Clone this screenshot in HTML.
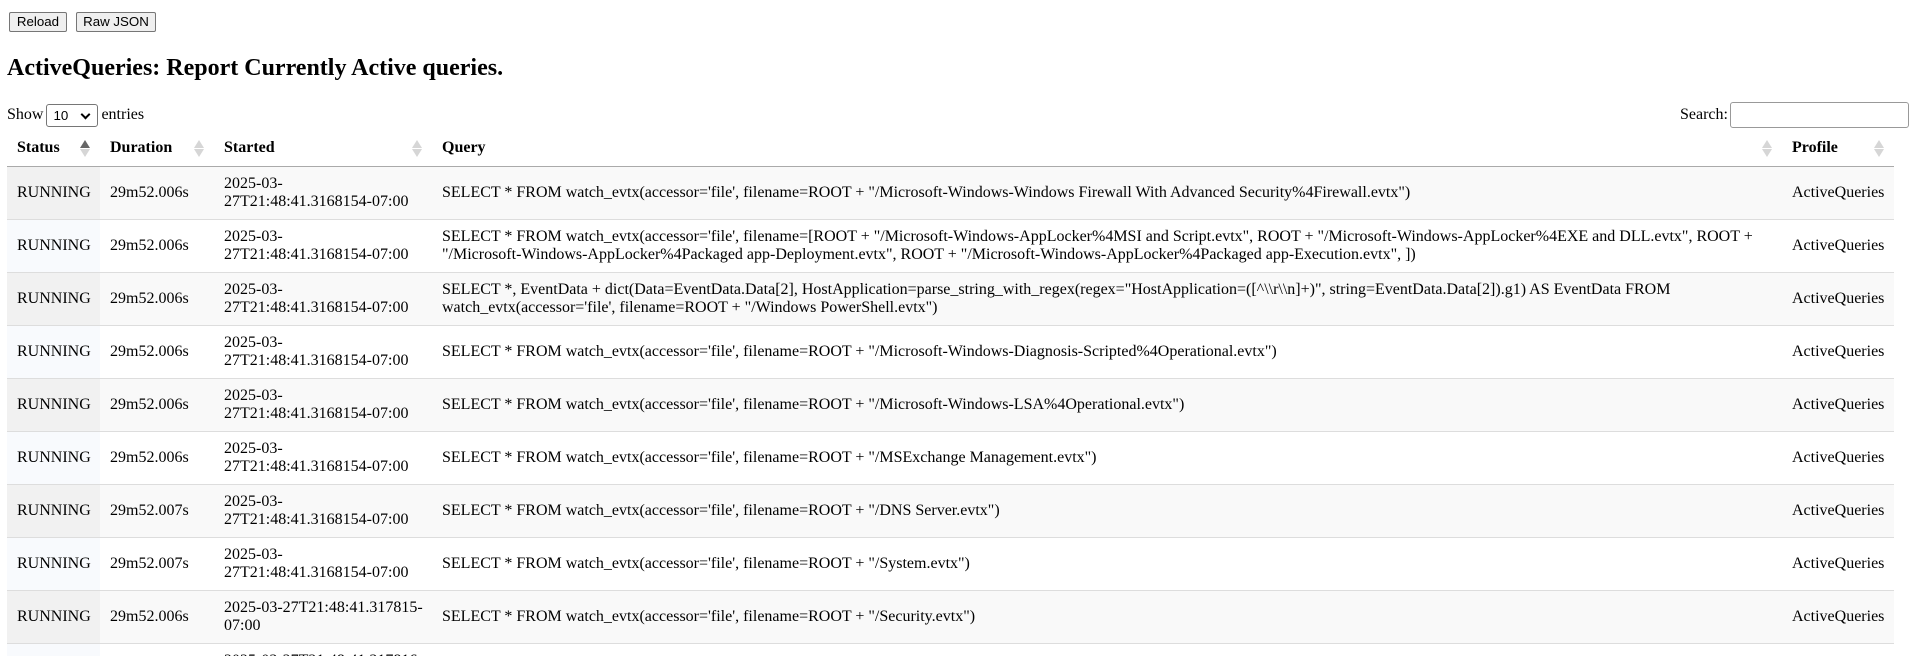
<!DOCTYPE html>
<html><head><meta charset="utf-8">
<style>
html,body{margin:0;padding:0;background:#fff;width:1917px;height:656px;overflow:hidden}
body{font-family:"Liberation Serif","Times New Roman",serif;font-size:16px;color:#000;position:relative}
.btn{position:absolute;top:12px;height:20px;font-family:"Liberation Sans",Arial,sans-serif;font-size:13.3px;background:#efefef;border:1px solid #767676;border-radius:2px;box-sizing:border-box;line-height:18px;text-align:center}
h2{position:absolute;left:7px;top:53px;margin:0;font-size:24px;font-weight:bold;line-height:30px;white-space:nowrap}
.show{position:absolute;left:7px;top:103px;line-height:23px}
.sel{display:inline-block;vertical-align:middle;width:52px;height:23px;border:1px solid #767676;border-radius:3px;box-sizing:border-box;font-family:"Liberation Sans",Arial,sans-serif;font-size:13.3px;line-height:21px;padding-left:6px;position:relative;margin:0 3px}
.sel:after{content:"";position:absolute;right:8px;top:6px;width:5px;height:5px;border-right:2px solid #000;border-bottom:2px solid #000;transform:rotate(45deg)}
.search{position:absolute;left:1680px;top:102px;line-height:26px}
.search span{position:absolute;left:50px;top:0;width:179px;height:26px;border:1px solid #999;border-radius:3px;box-sizing:border-box}
table{position:absolute;left:7px;top:130px;width:1887px;border-collapse:collapse;table-layout:fixed}
th{font-weight:bold;text-align:left;padding:10px 18px 10px 10px;border-bottom:1px solid #aaa;height:16px;line-height:16px;position:relative;white-space:nowrap}
td{padding:8px 10px;line-height:18px;height:36px;border-top:1px solid #ddd;vertical-align:middle}
td.st{white-space:nowrap;overflow:visible}
tbody tr:first-child td{border-top:none}
tr.o td{background:#f9f9f9}
tr.o td.s{background:#f1f1f1}
tr.e td.s{background:#f8fafd}
.ic{position:absolute;right:10px;top:10px;width:10px;height:18px}
.ic:before,.ic:after{content:"";position:absolute;left:0;border-left:5px solid transparent;border-right:5px solid transparent}
.ic:before{top:0;border-bottom:8px solid #d6d6d6}
.ic:after{bottom:1px;border-top:8px solid #d6d6d6}
.ic.asc:before{border-bottom-color:#666}
</style></head><body>
<div class="btn" style="left:9px;width:58px">Reload</div>
<div class="btn" style="left:76px;width:80px">Raw JSON</div>
<h2>ActiveQueries: Report Currently Active queries.</h2>
<div class="show">Show<span class="sel">10</span>entries</div>
<div class="search">Search:<span></span></div>
<table>
<colgroup><col style="width:93px"><col style="width:114px"><col style="width:218px"><col style="width:1350px"><col style="width:112px"></colgroup>
<thead><tr><th>Status<i class="ic asc"></i></th><th>Duration<i class="ic"></i></th><th>Started<i class="ic"></i></th><th>Query<i class="ic"></i></th><th>Profile<i class="ic"></i></th></tr></thead>
<tbody>
<tr class="o"><td class="s">RUNNING</td><td>29m52.006s</td><td class="st">2025-03-<br>27T21:48:41.3168154-07:00</td><td>SELECT * FROM watch_evtx(accessor='file', filename=ROOT + "/Microsoft-Windows-Windows Firewall With Advanced Security%4Firewall.evtx")</td><td>ActiveQueries</td></tr>
<tr class="e"><td class="s">RUNNING</td><td>29m52.006s</td><td class="st">2025-03-<br>27T21:48:41.3168154-07:00</td><td>SELECT * FROM watch_evtx(accessor='file', filename=[ROOT + "/Microsoft-Windows-AppLocker%4MSI and Script.evtx", ROOT + "/Microsoft-Windows-AppLocker%4EXE and DLL.evtx", ROOT +<br>"/Microsoft-Windows-AppLocker%4Packaged app-Deployment.evtx", ROOT + "/Microsoft-Windows-AppLocker%4Packaged app-Execution.evtx", ])</td><td>ActiveQueries</td></tr>
<tr class="o"><td class="s">RUNNING</td><td>29m52.006s</td><td class="st">2025-03-<br>27T21:48:41.3168154-07:00</td><td>SELECT *, EventData + dict(Data=EventData.Data[2], HostApplication=parse_string_with_regex(regex="HostApplication=([^\\r\\n]+)", string=EventData.Data[2]).g1) AS EventData FROM<br>watch_evtx(accessor='file', filename=ROOT + "/Windows PowerShell.evtx")</td><td>ActiveQueries</td></tr>
<tr class="e"><td class="s">RUNNING</td><td>29m52.006s</td><td class="st">2025-03-<br>27T21:48:41.3168154-07:00</td><td>SELECT * FROM watch_evtx(accessor='file', filename=ROOT + "/Microsoft-Windows-Diagnosis-Scripted%4Operational.evtx")</td><td>ActiveQueries</td></tr>
<tr class="o"><td class="s">RUNNING</td><td>29m52.006s</td><td class="st">2025-03-<br>27T21:48:41.3168154-07:00</td><td>SELECT * FROM watch_evtx(accessor='file', filename=ROOT + "/Microsoft-Windows-LSA%4Operational.evtx")</td><td>ActiveQueries</td></tr>
<tr class="e"><td class="s">RUNNING</td><td>29m52.006s</td><td class="st">2025-03-<br>27T21:48:41.3168154-07:00</td><td>SELECT * FROM watch_evtx(accessor='file', filename=ROOT + "/MSExchange Management.evtx")</td><td>ActiveQueries</td></tr>
<tr class="o"><td class="s">RUNNING</td><td>29m52.007s</td><td class="st">2025-03-<br>27T21:48:41.3168154-07:00</td><td>SELECT * FROM watch_evtx(accessor='file', filename=ROOT + "/DNS Server.evtx")</td><td>ActiveQueries</td></tr>
<tr class="e"><td class="s">RUNNING</td><td>29m52.007s</td><td class="st">2025-03-<br>27T21:48:41.3168154-07:00</td><td>SELECT * FROM watch_evtx(accessor='file', filename=ROOT + "/System.evtx")</td><td>ActiveQueries</td></tr>
<tr class="o"><td class="s">RUNNING</td><td>29m52.006s</td><td class="st">2025-03-27T21:48:41.317815-<br>07:00</td><td>SELECT * FROM watch_evtx(accessor='file', filename=ROOT + "/Security.evtx")</td><td>ActiveQueries</td></tr>
<tr class="e"><td class="s">RUNNING</td><td>29m52.006s</td><td class="st">2025-03-27T21:48:41.317816-<br>07:00</td><td>SELECT * FROM watch_evtx(accessor='file', filename=ROOT + "/Application.evtx")</td><td>ActiveQueries</td></tr>
</tbody></table>
</body></html>
